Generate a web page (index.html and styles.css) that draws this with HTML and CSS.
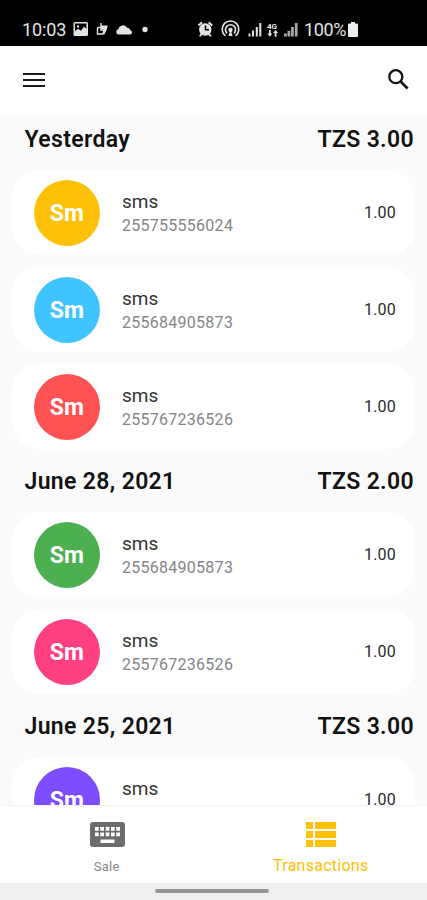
FILE: index.html
```
<!DOCTYPE html>
<html lang="en">
<head>
<meta charset="utf-8">
<meta name="viewport" content="width=device-width">
<title>Transactions</title>
<link rel="stylesheet" href="styles.css">
</head>
<body>
<div class="screen">
  <div class="status">
    <span class="clock">10:03</span>
    <svg class="status-left" width="78" height="18" viewBox="0 0 78 18" fill="#e4e4e4">
      <path fill-rule="evenodd" d="M2 1h11.500a1.500 1.500 0 0 1 1.500 1.500v11a1.500 1.500 0 0 1-1.500 1.500H2A1.500 1.500 0 0 1 .5 13.500v-11A1.500 1.500 0 0 1 2 1zM2 2.600v7.600l3-2.500 3 2 3-4 2.500 2V2.600zM4 4.500h2v2H4z"/>
      <path fill="none" stroke="#e4e4e4" stroke-width="1.400" d="M24.500 6.500v6.500h5.500l1-4h-3V2M24.500 6.500h3.500"/>
      <path d="M28 4.500h6.800l-1 4-2.500 5-1.500-1 1-4H28z"/>
      <path d="M45.500 13.500a2.700 2.700 0 0 1-.2-5.300 4.800 4.800 0 0 1 8.600-1.800 3.400 3.400 0 0 1 3.300 2.600 2.300 2.300 0 0 1 0 4.500z"/>
      <circle cx="72" cy="8.500" r="2.700"/>
    </svg>
    <svg class="status-right" width="102" height="18" viewBox="0 0 102 18" fill="#e4e4e4">
      <path d="M-.2 3.800 3.500.6l1.200 1.600-3.700 3zM11.200.6l3.700 3.200-1.200 1.400-3.700-3z"/>
      <path d="m3 12-2 3 1.500.8 2.500-2.700zm8.500 0 2.200 3-1.500.8-2.700-2.700z"/>
      <circle cx="7.300" cy="8.500" r="6.200"/>
      <path fill="none" stroke="#000" stroke-width="1.500" d="M7.500 4.500v4.300h3.500"/>
      <g fill="none" stroke="#e4e4e4" stroke-width="1.700">
        <path d="M27.500 14.900a8.300 8.300 0 1 1 10 0M29 12.300a5 5 0 1 1 7 0"/>
      </g>
      <circle cx="32.500" cy="9" r="2.200"/>
      <path d="m32.500 9 2.200 6h-4.400z"/>
      <path d="M50.500 12.500h2v3h-2zM54 9.500h2v6h-2zM57.800 6h2v9.500h-2zM61.300 2h2v13.500h-2z"/>
      <text class="network" x="69" y="7.500">4G</text>
      <path d="M71 9h1.800v3.500h1.700l-2.600 3.200-2.600-3.200H71zM76.700 15.700V12H75l2.600-3 2.600 3h-1.700v3.700z"/>
      <path fill="#a5a5a5" d="M86 12.500h2.800v3H86zM89.500 9.800h2.800v5.700h-2.800zM93 6h2.800v9.500H93zM96.800 2h2.800v13.500h-2.800z"/>
    </svg>
    <span class="percent">100%</span>
    <svg class="battery" width="10" height="15" viewBox="0 0 10 15"><path fill="#eee" d="M3 0h4v1.500h2q1 0 1 1V14q0 1-1 1H1q-1 0-1-1V2.500q0-1 1-1h2z"/></svg>
  </div>
  <header class="appbar">
    <svg width="22" height="16" viewBox="0 0 22 16"><path stroke="#1b1b1b" stroke-width="2.200" d="M0 2h22M0 8h22M0 14h22"/></svg>
    <svg width="21" height="21" viewBox="0 0 21 21" fill="none" stroke="#151515"><circle cx="7.800" cy="7.700" r="6.500" stroke-width="2.300"/><path stroke-width="2.800" d="m12.600 12.500 7 7"/></svg>
  </header>
  <main class="list">
    <section>
      <h2 class="day"><span>Yesterday</span><span class="total">TZS 3.00</span></h2>
      <article class="card"><div class="avatar amber">Sm</div><div class="info"><p class="name">sms</p><p class="phone">255755556024</p></div><span class="amount">1.00</span></article>
      <article class="card"><div class="avatar blue">Sm</div><div class="info"><p class="name">sms</p><p class="phone">255684905873</p></div><span class="amount">1.00</span></article>
      <article class="card"><div class="avatar red">Sm</div><div class="info"><p class="name">sms</p><p class="phone">255767236526</p></div><span class="amount">1.00</span></article>
    </section>
    <section>
      <h2 class="day"><span>June 28, 2021</span><span class="total">TZS 2.00</span></h2>
      <article class="card"><div class="avatar green">Sm</div><div class="info"><p class="name">sms</p><p class="phone">255684905873</p></div><span class="amount">1.00</span></article>
      <article class="card"><div class="avatar pink">Sm</div><div class="info"><p class="name">sms</p><p class="phone">255767236526</p></div><span class="amount">1.00</span></article>
    </section>
    <section>
      <h2 class="day"><span>June 25, 2021</span><span class="total">TZS 3.00</span></h2>
      <article class="card"><div class="avatar violet">Sm</div><div class="info"><p class="name">sms</p></div><span class="amount">1.00</span></article>
    </section>
  </main>
  <nav class="tabs">
    <div class="tab">
      <svg width="35" height="25" viewBox="0 0 35 25"><rect width="35" height="25" rx="3" fill="#6c6c6c"/><path fill="#fff" d="M5 5h3.700v3.700H5zM10.300 5H14v3.700h-3.700zM15.700 5h3.700v3.700h-3.700zM21 5h3.700v3.700H21zM26.300 5H30v3.700h-3.700zM5 10.500h3.700v3.700H5zM10.300 10.500H14v3.700h-3.700zM15.700 10.500h3.700v3.700h-3.700zM21 10.500h3.700v3.700H21zM26.300 10.500H30v3.700h-3.700zM10.500 17.500h14V21h-14z"/></svg>
      <span class="sale">Sale</span>
    </div>
    <div class="tab active">
      <svg width="30" height="25" viewBox="0 0 30 25" fill="#ffc107"><path d="M0 0h7v7H0zM9 0h21v7H9zM0 9h7v7H0zM9 9h21v7H9zM0 18h7v7H0zM9 18h21v7H9z"/></svg>
      <span class="transactions">Transactions</span>
    </div>
  </nav>
  <div class="gesture"><div class="handle"></div></div>
</div>
</body>
</html>
```
FILE: styles.css
```
* { box-sizing: border-box; }
body { margin: 0; font-family: Roboto, sans-serif; background: #fff; }
h2, p { margin: 0; }
svg { display: block; flex: none; overflow: visible; }
.screen { width: 427px; height: 900px; display: flex; flex-direction: column; overflow: hidden; }
.status { height: 46px; flex: none; display: flex; align-items: center; padding: 13px 0 0 22px; background: #000; color: #e4e4e4; font-size: 18px; white-space: nowrap; }
.clock { width: 51px; letter-spacing: -.1px; }
.status-right { margin-left: 47px; }
.percent { width: 43px; margin-left: 4px; font-size: 18px; letter-spacing: -.4px; }
.battery { margin-left: 1px; }
.network { font-size: 8px; font-weight: 700; }
.appbar { height: 67px; flex: none; display: flex; align-items: center; justify-content: space-between; padding: 0 18px 0 23px; background: #fff; }
.list { flex: 1; min-height: 0; overflow: hidden; background: #fafafa; padding: 0 12px; }
.day { height: 63px; display: flex; justify-content: space-between; align-items: center; padding: 2px 1px 0 12.5px; font-size: 23px; font-weight: 600; letter-spacing: .35px; color: #121212; }
section:first-child .day { margin-top: -6px; }
.card { height: 85px; display: flex; align-items: center; padding: 0 19px 0 22px; background: #fff; border-radius: 28px; }
.card + .card { margin-top: 12px; }
.avatar { width: 66px; height: 66px; border-radius: 50%; display: flex; align-items: center; justify-content: center; color: #fff; font-size: 23px; font-weight: 700; letter-spacing: .3px; padding-top: 2px; }
.info { margin-left: 22px; flex: 1; height: 85px; padding-top: 20px; }
.name { font-size: 19px; line-height: 24px; color: #333; }
.phone { font-size: 16px; line-height: 24px; letter-spacing: .27px; color: #858585; }
.amount { font-size: 16px; letter-spacing: .2px; color: #2a2a2a; }
.amber { background: #ffc107; }
.blue { background: #40c4ff; }
.red { background: #ff5252; }
.green { background: #4caf50; }
.pink { background: #ff4081; }
.violet { background: #7c4dff; }
.tabs { height: 78px; flex: none; display: flex; background: #fff; border-top: 1px solid #f3f3f3; }
.tab { flex: 1; display: flex; flex-direction: column; align-items: center; padding-top: 16px; }
.tab svg { margin-left: 1px; }
.sale { font-size: 13px; line-height: 18px; letter-spacing: .3px; margin-top: 11px; color: #888; }
.tab.active svg { margin-left: 2px; }
.transactions { font-size: 16px; line-height: 18px; letter-spacing: .25px; margin: 10px 0 0 1px; color: #ffc107; }
.gesture { height: 17px; flex: none; background: #f0f0f0; display: flex; justify-content: center; padding-top: 6px; }
.handle { width: 114px; height: 4px; border-radius: 2px; background: #959595; margin-right: 3px; }
```
